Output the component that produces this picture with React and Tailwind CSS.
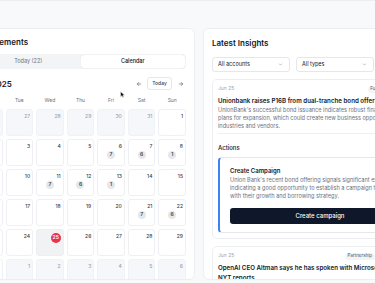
import { ArrowLeft, ArrowRight, ChevronDown } from 'lucide-react';

const WEEKDAYS = ['Mon', 'Tue', 'Wed', 'Thu', 'Fri', 'Sat', 'Sun'];
const COUNTS = { 6: 7, 7: 6, 8: 1, 11: 7, 12: 6, 13: 1, 21: 7, 22: 6 };
const TODAY = 25;

const buildDays = () => {
  const days = [];
  for (let d = 26; d <= 31; d++) days.push({ day: d, muted: true });
  for (let d = 1; d <= 30; d++) days.push({ day: d, count: COUNTS[d], today: d === TODAY });
  for (let d = 1; d <= 6; d++) days.push({ day: d, muted: true });
  return days;
};

const DayCell = ({ day, muted, today, count }) => (
  <div
    className={`h-[27px] rounded-[3px] border flex flex-col pt-[2px] pr-[2px] ${muted
      ? 'bg-[#f6f7fa] border-[#f1f2f5]'
      : today
        ? 'bg-[#f1f2f4] border-[#eceef1]'
        : 'bg-white border-[#eef0f3]'
      }`}
  >
    <div className="flex justify-end h-[8px] items-center">
      {today ? (
        <span className="mt-[4px] w-[10px] h-[10px] rounded-full bg-[#e8334f] text-white text-[5px] font-semibold flex items-center justify-center">
          {day}
        </span>
      ) : (
        <span className={`text-[5px] leading-none font-medium ${muted ? 'text-[#9ca3af]' : 'text-[#374151]'}`}>
          {day}
        </span>
      )}
    </div>
    {count && (
      <span className="self-center ml-[2px] mt-[1px] w-[8px] h-[8px] rounded-full bg-[#e5e7eb] text-[#374151] text-[5px] font-semibold flex items-center justify-center">
        {count}
      </span>
    )}
  </div>
);

const CalendarCard = () => (
  <div className="w-[229px] h-[252px] shrink-0 overflow-hidden rounded-[6px] border border-[#eceef1] bg-white p-[8px]">
    <h2 className="text-[8px] leading-[10px] font-semibold text-[#111827]">Engagements</h2>

    {/* Tabs */}
    <div className="mt-[7px] h-[15px] grid grid-cols-2 rounded-[4px] bg-[#f3f4f6] p-[1px]">
      <div className="flex items-center justify-center text-[5.5px] text-[#6b7280]">Today (22)</div>
      <div className="flex items-center justify-center rounded-[3px] bg-white shadow-[0_0_1px_rgba(0,0,0,0.15)] text-[5.5px] font-medium text-[#111827]">
        Calendar
      </div>
    </div>

    {/* Month header */}
    <div className="mt-[8px] h-[13px] flex items-center justify-between">
      <span className="text-[8px] font-semibold text-[#111827]">Jun 2025</span>
      <div className="flex items-center gap-[3px]">
        <button className="w-[11px] h-[13px] flex items-center justify-center text-[#374151]">
          <ArrowLeft size={6} strokeWidth={2} />
        </button>
        <button className="w-[25px] h-[13px] rounded-[3px] border border-[#e5e7eb] text-[5px] font-medium text-[#374151]">
          Today
        </button>
        <button className="w-[11px] h-[13px] flex items-center justify-center text-[#374151]">
          <ArrowRight size={6} strokeWidth={2} />
        </button>
      </div>
    </div>

    <div className="mt-[6px] grid grid-cols-7 gap-[3px]">
      {WEEKDAYS.map((w) => (
        <div key={w} className="text-center text-[5px] leading-[8px] text-[#6b7280]">{w}</div>
      ))}
    </div>

    <div className="mt-[5px] grid grid-cols-7 gap-[3px]">
      {buildDays().map((d, i) => (
        <DayCell key={i} {...d} />
      ))}
    </div>
  </div>
);

const Select = ({ label }) => (
  <div className="w-[78px] h-[15px] rounded-[3px] border border-[#e5e7eb] bg-white flex items-center justify-between pl-[5px] pr-[6px]">
    <span className="text-[5.5px] text-[#111827]">{label}</span>
    <ChevronDown size={5} strokeWidth={2} className="text-[#6b7280]" />
  </div>
);

const Tag = ({ children }) => (
  <span className="h-[7px] px-[2.5px] rounded-full bg-[#f3f4f6] text-[4.5px] text-[#4b5563] flex items-center whitespace-nowrap">
    {children}
  </span>
);

const InsightHeader = ({ tags }) => (
  <div className="h-[8px] flex items-center justify-between">
    <span className="text-[5px] text-[#9ca3af]">Jun 25</span>
    <div className="flex items-center gap-[3px]">
      {tags.map((t) => (
        <Tag key={t}>{t}</Tag>
      ))}
    </div>
  </div>
);

const InsightsCard = () => (
  <div className="w-[233px] h-[252px] shrink-0 overflow-hidden rounded-[6px] border border-[#eceef1] bg-white p-[8px]">
    <h2 className="mt-[1px] text-[8px] leading-[10px] font-semibold text-[#111827]">Latest Insights</h2>

    <div className="mt-[9px] flex gap-[6px]">
      <Select label="All accounts" />
      <Select label="All types" />
    </div>

    {/* Insight 1 */}
    <div className="mt-[7px] rounded-[5px] border border-[#eceef1] p-[5px]">
      <InsightHeader tags={['Funding', 'UnionBank']} />
      <h3 className="mt-[3px] text-[6.2px] leading-[9px] font-semibold text-[#111827]">
        Unionbank raises P16B from dual-tranche bond offer
      </h3>
      <p className="mt-[1px] text-[5.6px] leading-[8px] text-[#6b7280]">
        UnionBank's successful bond issuance indicates robust financial health and
        <br />
        plans for expansion, which could create new business opportunities for
        <br />
        industries and vendors.
      </p>
      <div className="mt-[3px] border-t border-[#eef0f3]" />
      <div className="pt-[10px] text-[6px] leading-[8px] font-medium text-[#111827]">Actions</div>

      <div className="mt-[5px] rounded-[4px] border border-[#e5e7eb] border-l-2 border-l-[#3b82f6] px-[10px] pt-[9px] pb-[8px]">
        <div className="text-[6px] leading-[8px] font-semibold text-[#111827]">Create Campaign</div>
        <p className="mt-[1px] text-[5.6px] leading-[8px] text-[#6b7280]">
          Union Bank's recent bond offering signals significant expansion,
          <br />
          indicating a good opportunity to establish a campaign that aligns
          <br />
          with their growth and borrowing strategy.
        </p>
        <button className="mt-[4px] w-full h-[16px] rounded-[3px] bg-[#0f172a] text-white text-[6px] font-medium">
          Create campaign
        </button>
      </div>
    </div>

    {/* Insight 2 */}
    <div className="mt-[7px] rounded-[5px] border border-[#eceef1] p-[5px]">
      <InsightHeader tags={['Partnership', 'Microsoft, OpenAI']} />
      <h3 className="mt-[3px] text-[6.2px] leading-[9.5px] font-semibold text-[#111827]">
        OpenAI CEO Altman says he has spoken with Microsoft CEO,
        <br />
        NYT reports
      </h3>
    </div>
  </div>
);

const Cursor = () => (
  <svg className="absolute left-[120px] top-[91px]" width="5" height="7" viewBox="0 0 10 14">
    <path d="M1 1 L1 12 L3.8 9.4 L5.8 13 L7.6 12.1 L5.7 8.6 L9.4 8.6 Z" fill="#111" stroke="#fff" strokeWidth="1" />
  </svg>
);

export default function App() {
  return (
    <div className="relative w-[375px] h-[283px] overflow-hidden bg-[#f8f9fb] font-['Inter',sans-serif]">
      <div className="h-px bg-[#eceef2]" />
      <div className="flex gap-[8px] ml-[-34px] mt-[27px]">
        <CalendarCard />
        <InsightsCard />
      </div>
      <Cursor />
    </div>
  );
}
